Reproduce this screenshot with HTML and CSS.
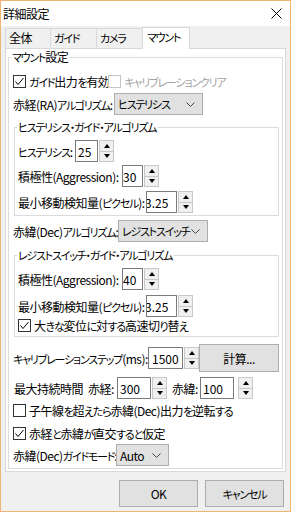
FILE: index.html
```html
<!DOCTYPE html>
<html>
<head>
	<meta charset="utf-8">
	<title>詳細設定</title>
	<link rel="stylesheet" href="styles.css">
</head>
<body>
	<div class="win">
		<div class="titlebar">
			<span>詳細設定</span>
			<svg class="close" width="11" height="11" viewBox="0 0 11 11"><path d="M0.5 0.5L10.5 10.5M10.5 0.5L0.5 10.5" stroke="#000" stroke-width="1" fill="none"/></svg>
		</div>
		<div class="tabs">
			<div class="tab first">全体</div>
			<div class="tab"><span class="k">ガイド</span></div>
			<div class="tab"><span class="k">カメラ</span></div>
			<div class="tab sel"><span class="k">マウント</span></div>
		</div>
		<div class="panel">
			<fieldset class="grp">
				<legend><span class="k">マウント</span>設定</legend>
				<div class="row cb r-guide">
					<span class="box"><svg width="11" height="11" viewBox="0 0 11 11"><path d="M1.5 5.5L4 8.5L9.5 2" stroke="#000" stroke-width="1" fill="none"/></svg></span>
					<span><span class="k">ガイド</span>出力<span class="k">を</span>有効</span>
					<span class="box off"></span>
					<span class="dim k">キャリブレーションクリア</span>
				</div>
				<div class="row r-ra">
					<span class="lbl w-ra">赤経(RA)<span class="k">アルゴリズム</span>:</span>
					<div class="combo w-ra-c"><span class="k">ヒステリシス</span><svg width="9" height="5" viewBox="0 0 9 5"><path d="M0.5 0.5L4.5 4.5L8.5 0.5" stroke="#444" fill="none"/></svg></div>
				</div>
				<fieldset class="sub sub-1">
					<legend><span class="k">ヒステリシス・ガイド・アルゴリズム</span></legend>
					<div class="row r-hys">
						<span class="lbl w-hys"><span class="k">ヒステリシス</span>:</span>
						<div class="num w-hys-n"><span>25</span></div>
						<div class="spin"><div><i class="up"></i></div><div><i class="dn"></i></div></div>
					</div>
					<div class="row r-agg">
						<span class="lbl w-agg">積極性(Aggression):</span>
						<div class="num w-agg-n clip"><span>30</span></div>
						<div class="spin"><div><i class="up"></i></div><div><i class="dn"></i></div></div>
					</div>
					<div class="row r-min">
						<span class="lbl w-min">最小移動検知量(<span class="k">ピクセル</span>):</span>
						<div class="num w-min-n clip2"><span>3.25</span></div>
						<div class="spin"><div><i class="up"></i></div><div><i class="dn"></i></div></div>
					</div>
				</fieldset>
				<div class="row r-dec">
					<span class="lbl w-dec">赤緯(Dec)<span class="k">アルゴリズム</span>:</span>
					<div class="combo w-dec-c"><span class="k">レジストスイッチ</span><svg width="9" height="5" viewBox="0 0 9 5"><path d="M0.5 0.5L4.5 4.5L8.5 0.5" stroke="#444" fill="none"/></svg></div>
				</div>
				<fieldset class="sub sub-2">
					<legend><span class="k">レジストスイッチ・ガイド・アルゴリズム</span></legend>
					<div class="row r-agg2">
						<span class="lbl w-agg">積極性(Aggression):</span>
						<div class="num w-agg-n clip"><span>40</span></div>
						<div class="spin"><div><i class="up"></i></div><div><i class="dn"></i></div></div>
					</div>
					<div class="row r-min2">
						<span class="lbl w-min">最小移動検知量(<span class="k">ピクセル</span>):</span>
						<div class="num w-min-n clip2"><span>3.25</span></div>
						<div class="spin"><div><i class="up"></i></div><div><i class="dn"></i></div></div>
					</div>
					<div class="row cb">
						<span class="box"><svg width="11" height="11" viewBox="0 0 11 11"><path d="M1.5 5.5L4 8.5L9.5 2" stroke="#000" stroke-width="1" fill="none"/></svg></span>
						<span>大<span class="k">きな</span>変位<span class="k">に</span>対<span class="k">する</span>高速切<span class="k">り</span>替<span class="k">え</span></span>
					</div>
				</fieldset>
				<div class="row r-cal">
					<span class="lbl w-cal"><span class="k">キャリブレーションステップ</span>(ms):</span>
					<div class="num w-cal-n"><span>1500</span></div>
					<div class="spin"><div><i class="up"></i></div><div><i class="dn"></i></div></div>
					<div class="btn calc">計算...</div>
				</div>
				<div class="row r-max">
					<span class="lbl w-max">最大持続時間</span>
					<span class="lbl w-ax">赤経:</span>
					<div class="num w-max-n"><span>300</span></div>
					<div class="spin"><div><i class="up"></i></div><div><i class="dn"></i></div></div>
					<span class="lbl w-ax gap-dec">赤緯:</span>
					<div class="num w-max-n"><span>100</span></div>
					<div class="spin spin-far"><div><i class="up"></i></div><div><i class="dn"></i></div></div>
				</div>
				<div class="row cb r-rev">
					<span class="box"></span>
					<span>子午線<span class="k">を</span>超<span class="k">えたら</span>赤緯(Dec)出力<span class="k">を</span>逆転<span class="k">する</span></span>
				</div>
				<div class="row cb r-orth">
					<span class="box"><svg width="11" height="11" viewBox="0 0 11 11"><path d="M1.5 5.5L4 8.5L9.5 2" stroke="#000" stroke-width="1" fill="none"/></svg></span>
					<span>赤経<span class="k">と</span>赤緯<span class="k">が</span>直交<span class="k">すると</span>仮定</span>
				</div>
				<div class="row r-mode">
					<span class="lbl w-mode">赤緯(Dec)<span class="k">ガイドモード</span>:</span>
					<div class="combo w-mode-c"><span>Auto</span><svg width="9" height="5" viewBox="0 0 9 5"><path d="M0.5 0.5L4.5 4.5L8.5 0.5" stroke="#444" fill="none"/></svg></div>
				</div>
			</fieldset>
		</div>
		<div class="btns">
			<div class="btn">OK</div>
			<div class="btn"><span class="k">キャンセル</span></div>
		</div>
	</div>
</body>
</html>
```

FILE: styles.css
```css
* {
	box-sizing: border-box;
}
html, body {
	margin: 0;
	height: 100%;
}
body {
	font-family: "Noto Sans CJK JP", sans-serif;
	font-size: 12px;
	font-feature-settings: "palt" 1;
	letter-spacing: -0.5px;
	color: #000;
	background: #f0f0f0;
}
/* kana runs are set narrower, like the UI font of the original */
.k {
	font-size: 11px;
	letter-spacing: -1.2px;
}
.win {
	width: 291px;
	height: 512px;
	border: 1px solid #eeb575;
	background: #f0f0f0;
	display: flex;
	flex-direction: column;
}
.titlebar {
	height: 25px;
	flex: none;
	background: #fff;
	display: flex;
	align-items: center;
	justify-content: space-between;
	padding: 0 8px 0 2px;
	line-height: 16px;
}

/* tabs */
.tabs {
	display: flex;
	height: 22px;
	flex: none;
	margin-top: 1px;
	padding-left: 4px;
	position: relative;
	z-index: 1;
}
.tab {
	width: 46px;
	height: 20px;
	margin-top: 1px;
	padding-left: 3px;
	line-height: 18px;
	border: 1px solid #d9d9d9;
	border-left: none;
	border-bottom: none;
	background: #f0f0f0;
}
.tab.first {
	border-left: 1px solid #d9d9d9;
}
.tab.sel {
	width: 48px;
	height: 22px;
	margin-top: 0;
	margin-left: -1px;
	padding-left: 4px;
	line-height: 18px;
	border-left: 1px solid #d9d9d9;
	background: #fff;
}
.panel {
	flex: none;
	margin: -1px 0 0 4px;
	width: 281px;
	height: 424px;
	background: #fff;
	border: 1px solid #d9d9d9;
	padding-left: 2px;
}

/* group boxes */
fieldset {
	margin: 0;
	min-width: 0;
	border: 1px solid #dcdcdc;
}
legend {
	line-height: 16px;
	padding: 0 1px;
	margin-left: -2px;
}
.grp {
	width: 275px;
	padding: 0 3px 2px 4px;
}
.sub {
	margin: 4px 0 0 1px;
	width: 265px;
	padding: 0 3px 2px 3px;
}
.sub legend {
	margin-left: -1px;
}
.sub-2 {
	margin-top: 5px;
}

/* rows */
.row {
	display: flex;
	align-items: center;
	height: 22px;
	white-space: nowrap;
}
.row.cb {
	height: 17px;
}
.r-guide { margin-top: 8px; }
.r-ra { margin-top: 3px; }
.r-hys { margin-top: 5px; }
.r-agg { margin-top: 3px; }
.r-min { margin-top: 4px; }
.r-dec { margin-top: 4px; }
.r-agg2 { margin-top: 5px; }
.r-min2 { margin-top: 5px; }
.r-cal { margin-top: 7px; height: 28px; }
.r-max { margin-top: 5px; }
.r-rev { margin-top: 3px; }
.r-orth { margin-top: 6px; }
.r-mode { margin-top: 2px; }

.lbl {
	flex: none;
}
.w-ra { width: 101px; }
.w-dec { width: 105px; }
.w-hys { width: 57px; }
.w-agg { width: 104px; }
.w-min { width: 128px; }
.w-cal { width: 135px; }
.w-max { width: 75px; padding-left: 1px; }
.w-ax { width: 29px; }
.gap-dec { margin-left: 5px; width: 28px; }
.w-mode { width: 103px; }

/* checkbox */
.box {
	width: 13px;
	height: 13px;
	flex: none;
	border: 1px solid #333;
	background: #fff;
	margin-right: 3px;
	display: flex;
}
.box.off {
	border-color: #c4c4c4;
	margin-left: -1px;
}
.dim {
	color: #a3a3a3;
}

/* combo */
.combo {
	height: 22px;
	background: #e1e1e1;
	border: 1px solid #adadad;
	display: flex;
	align-items: center;
	justify-content: space-between;
	padding: 0 7px 0 3px;
}
.w-ra-c { width: 89px; }
.w-dec-c { width: 90px; }
.w-mode-c { width: 53px; }

/* numeric up down */
.num {
	height: 22px;
	border: 1px solid #7a7a7a;
	background: #fff;
	display: flex;
	align-items: center;
	padding-left: 2px;
	overflow: hidden;
	flex: none;
	letter-spacing: 0;
}
.num.clip span {
	margin-left: -2px;
}
.num.clip2 span {
	margin-left: -4px;
}
.w-hys-n { width: 23px; }
.w-agg-n { width: 21px; }
.w-min-n { width: 31px; }
.w-cal-n { width: 35px; padding-left: 3px; }
.w-max-n { width: 34px; }
.spin {
	width: 15px;
	height: 22px;
	margin-left: 1px;
	display: flex;
	flex-direction: column;
	flex: none;
}
.spin > div {
	flex: 1;
	border: 1px solid #c8c8c8;
	background: #f0f0f0;
	display: flex;
	align-items: center;
	justify-content: center;
}
.spin > div + div {
	border-top: none;
}
.spin-far {
	margin-left: 4px;
}
.up, .dn {
	width: 0;
	height: 0;
	border-left: 3.5px solid transparent;
	border-right: 3.5px solid transparent;
}
.up {
	border-bottom: 4px solid #000;
}
.dn {
	border-top: 4px solid #000;
}

/* buttons */
.btn {
	width: 79px;
	height: 27px;
	background: #e1e1e1;
	border: 1px solid #adadad;
	display: flex;
	align-items: center;
	justify-content: center;
	flex: none;
}
.calc {
	width: 80px;
	height: 28px;
}
.btns {
	display: flex;
	justify-content: flex-end;
	gap: 7px;
	margin-top: 8px;
	padding-right: 6px;
}
```
